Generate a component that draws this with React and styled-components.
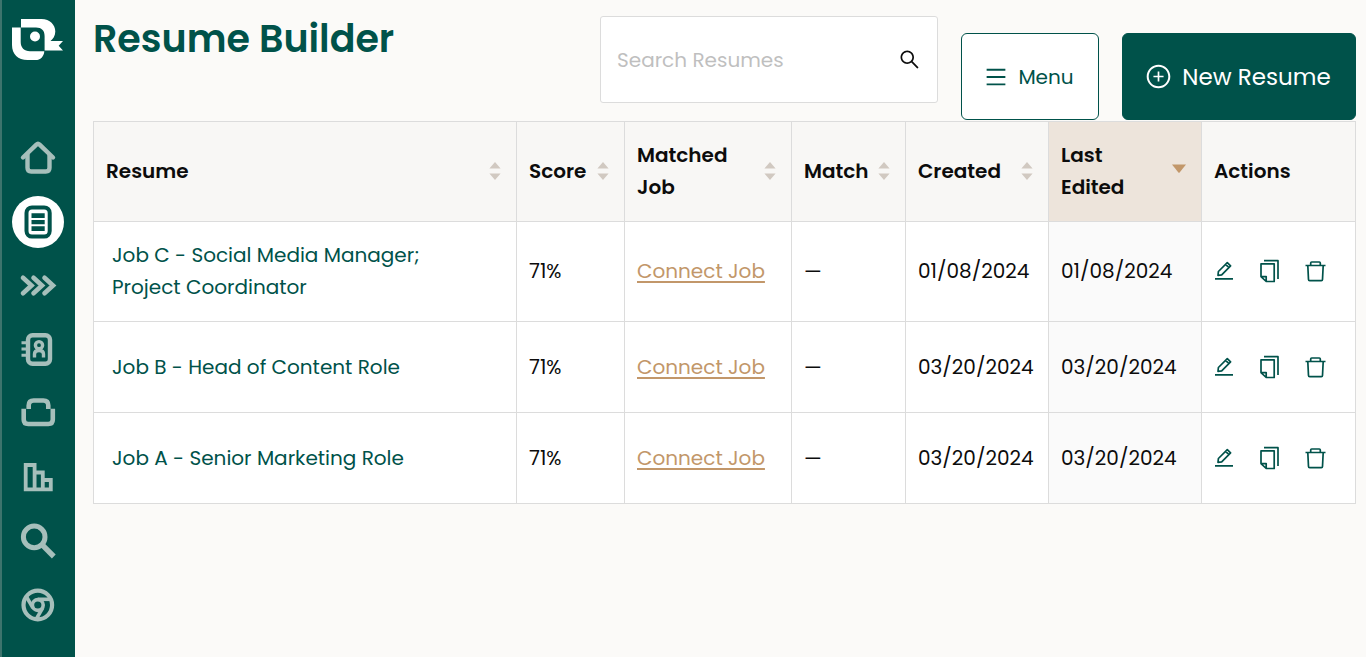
import { useState } from 'react';
import styled, { createGlobalStyle, ThemeProvider } from 'styled-components';
import {
  AiOutlineMenu,
  AiOutlinePlusCircle,
  AiOutlineSearch,
} from 'react-icons/ai';

const theme = {
  green: '#00524a',
  greenEdge: '#3d746d',
  navIcon: '#a6bfbb',
  bgColor: '#fbfaf8',
  headColor: '#f8f7f5',
  sortedHead: '#ede4db',
  sortedCell: '#fafafa',
  borderColor: '#dcdcdc',
  tan: '#c2976a',
  caret: '#d1c9c1',
};

const GlobalStyle = createGlobalStyle`
  * {
    box-sizing: border-box;
  }

  body {
    margin: 0;
    background: ${props => props.theme.bgColor};
    color: #0c0c0c;
    font-family: Poppins, Inter, 'Liberation Sans', sans-serif;
    font-size: 20px;
    line-height: 32px;
  }

  button,
  input {
    font: inherit;
  }

  svg {
    display: block;
    flex-shrink: 0;
  }
`;

const Page = styled.div`
  display: flex;
  min-height: 100vh;
`;

const Sidebar = styled.aside`
  display: flex;
  flex-direction: column;
  align-items: center;
  flex-shrink: 0;
  width: 75px;
  padding-top: 19px;
  background: ${props => props.theme.green};
  border-left: 2px solid ${props => props.theme.greenEdge};
  padding-right: 2px;
`;

const Nav = styled.nav`
  display: flex;
  flex-direction: column;
  gap: 12px;
  margin-top: 71px;
`;

const NavLink = styled.a`
  display: flex;
  justify-content: center;
  align-items: center;
  width: 52px;
  height: 52px;
  border-radius: 50%;
  color: ${props => (props.$active ? props.theme.green : props.theme.navIcon)};
  background: ${props => (props.$active ? '#fff' : 'transparent')};
`;

const Main = styled.main`
  flex: 1;
  min-width: 0;
  padding: 0 10px 0 18px;
`;

const Header = styled.header`
  display: flex;
  align-items: flex-start;
  gap: 23px;
  min-height: 121px;
  padding: 16px 0 1px;
`;

const Title = styled.h1`
  flex: 1;
  margin: 0;
  color: ${props => props.theme.green};
  font-size: 38px;
  font-weight: 600;
  line-height: 46px;
  white-space: nowrap;
`;

const SearchBox = styled.form`
  display: flex;
  align-items: center;
  width: 338px;
  height: 87px;
  padding: 0 16px;
  background: #fff;
  border: 1px solid ${props => props.theme.borderColor};
  border-radius: 3px;
`;

const SearchInput = styled.input`
  flex: 1;
  min-width: 0;
  padding: 0;
  border: none;
  outline: none;
  background: none;

  &::placeholder {
    color: #bfbfbf;
    opacity: 1;
  }
`;

const IconBtn = styled.button`
  display: flex;
  padding: 0;
  border: none;
  background: none;
  color: ${props => props.$color || props.theme.green};
  cursor: pointer;
`;

const HeaderBtn = styled.button`
  display: flex;
  align-items: center;
  align-self: flex-end;
  justify-content: center;
  gap: 10px;
  width: ${props => (props.$primary ? 234 : 138)}px;
  height: 87px;
  padding: 0 2px 0 0;
  border: 1px solid ${props => props.theme.green};
  border-radius: 6px;
  background: ${props => (props.$primary ? props.theme.green : '#fff')};
  color: ${props => (props.$primary ? '#fff' : props.theme.green)};
  font-size: ${props => (props.$primary ? 23 : 20)}px;
  white-space: nowrap;
  cursor: pointer;
`;

const Table = styled.table`
  width: 100%;
  table-layout: fixed;
  border-collapse: collapse;
  background: #fff;
`;

const Col = styled.col`
  width: ${props => (props.$width ? `${props.$width}px` : 'auto')};
`;

const HeadCell = styled.th`
  height: 100px;
  padding: 0 15px 2px 12px;
  border: 1px solid ${props => props.theme.borderColor};
  background: ${props =>
    props.$sorted ? props.theme.sortedHead : props.theme.headColor};
  font-weight: 600;
  text-align: left;
`;

const HeadContent = styled.div`
  display: flex;
  align-items: center;
  justify-content: space-between;
  gap: 8px;
`;

const Cell = styled.td`
  height: 91px;
  padding: 17px 0 18px ${props => props.$left || 12}px;
  border: 1px solid ${props => props.theme.borderColor};
  background: ${props => (props.$sorted ? props.theme.sortedCell : '#fff')};
`;

const ResumeLink = styled.a`
  display: block;
  max-width: 340px;
  color: ${props => props.theme.green};
  text-decoration: none;
`;

const JobLink = styled.a`
  color: ${props => props.theme.tan};
  text-decoration-thickness: 2px;
  text-underline-offset: 3px;
`;

const Actions = styled.div`
  display: flex;
  gap: 22px;
`;

const columns = [
  { key: 'resume', label: 'Resume', sortable: true },
  { key: 'score', label: 'Score', width: 108, sortable: true },
  { key: 'job', label: 'Matched Job', width: 167, sortable: true },
  { key: 'match', label: 'Match', width: 114, sortable: true },
  { key: 'created', label: 'Created', width: 143, sortable: true },
  { key: 'edited', label: 'Last Edited', width: 153, sortable: true },
  { key: 'actions', label: 'Actions', width: 154 },
];

const resumes = [
  {
    id: 3,
    name: 'Job C - Social Media Manager; Project Coordinator',
    score: '71%',
    created: '01/08/2024',
    edited: '01/08/2024',
  },
  {
    id: 2,
    name: 'Job B - Head of Content Role',
    score: '71%',
    created: '03/20/2024',
    edited: '03/20/2024',
  },
  {
    id: 1,
    name: 'Job A - Senior Marketing Role',
    score: '71%',
    created: '03/20/2024',
    edited: '03/20/2024',
  },
];

const Logo = () => (
  <svg width="52" height="42" viewBox="12 19 52 42" fill="#fff">
    <path d="M21 19H41.5C50 19 55.3 25 55.3 31.5C55.3 36 53 39 50.5 41H63L58.7 45.8L63 50.6H44.6V36C44.6 30.5 41.5 27.6 36 27.6H21Z" />
    <path d="M12 27.6H20.7V42C20.7 47.5 24 51.2 30 51.2H44.3C44 56.5 40.5 60 35.5 60H27.5C18 60 12 54 12 45Z" />
    <circle cx="35" cy="36.5" r="5" />
  </svg>
);

const NavIcon = ({ children, strokeWidth = 4 }) => (
  <svg
    width="40"
    height="40"
    viewBox="0 0 40 40"
    fill="none"
    stroke="currentColor"
    strokeWidth={strokeWidth}
  >
    {children}
  </svg>
);

const navItems = [
  {
    label: 'Home',
    icon: (
      <NavIcon strokeWidth={4.4}>
        <path
          d="M5 19.5L18.4 6.6Q20 5 21.6 6.6L35 19.5"
          strokeLinecap="round"
        />
        <path d="M9.5 16V29.8Q9.5 33.5 13.2 33.5H27.8Q31.5 33.5 31.5 29.8V16" />
      </NavIcon>
    ),
  },
  {
    label: 'Resumes',
    active: true,
    icon: (
      <NavIcon>
        <rect x="8.5" y="5.4" width="23.2" height="29.2" rx="5.5" />
        <path
          d="M13.5 11.2H26.7V16H13.5ZM13.5 18H26.7V22.3H13.5ZM13.5 24.3H26.7V29H13.5Z"
          fill="currentColor"
          stroke="none"
        />
      </NavIcon>
    ),
  },
  {
    label: 'Workflow',
    icon: (
      <NavIcon strokeWidth={4.6}>
        <path
          d="M5 11.8L13.5 19.5L5 27.2M15.5 11.8L24 19.5L15.5 27.2M26.5 11.8L35 19.5L26.5 27.2"
          strokeLinecap="round"
        />
      </NavIcon>
    ),
  },
  {
    label: 'Contacts',
    icon: (
      <NavIcon strokeWidth={4.4}>
        <rect x="10" y="5.3" width="22" height="28.5" rx="4.5" />
        <path d="M3.5 12.8H10M3.5 19H10M3.5 25.2H10" strokeWidth="3" />
        <circle cx="21" cy="15.2" r="3.6" strokeWidth="3.4" />
        <path
          d="M16.5 27.5V24Q16.5 20.5 21 20.5Q25.5 20.5 25.5 24V27.5"
          strokeWidth="3.4"
        />
      </NavIcon>
    ),
  },
  {
    label: 'Jobs',
    icon: (
      <NavIcon strokeWidth={4.6}>
        <path d="M10.7 15V11.5Q10.7 6.5 15.7 6.5H25.3Q30.3 6.5 30.3 11.5V15" />
        <path d="M5.7 14.7V25.5Q5.7 30 10.2 30H30.3Q34.8 30 34.8 25.5V14.7" />
      </NavIcon>
    ),
  },
  {
    label: 'Reports',
    icon: (
      <NavIcon strokeWidth={3.8}>
        <path d="M7.7 7H16.6V31.3H7.7ZM16.6 14.5H24.8V31.3H16.6M24.8 22H32.8V31.3H24.8" />
      </NavIcon>
    ),
  },
  {
    label: 'Search',
    icon: (
      <NavIcon strokeWidth={5}>
        <circle cx="16.2" cy="14.9" r="10.8" />
        <path d="M24 22.7L35.8 34.5" strokeWidth="5.4" />
      </NavIcon>
    ),
  },
  {
    label: 'Chrome extension',
    icon: (
      <NavIcon strokeWidth={4.2}>
        <circle cx="19.8" cy="19" r="14.3" />
        <circle cx="19.8" cy="19" r="5.4" strokeWidth="3.6" />
        {[0, 120, 240].map(angle => (
          <path
            key={angle}
            d="M19.8 13.3H32.3"
            strokeWidth="3.6"
            transform={`rotate(${angle} 19.8 19)`}
          />
        ))}
      </NavIcon>
    ),
  },
];

const SortIcon = ({ sorted }) =>
  sorted ? (
    <svg width="14" height="20" viewBox="0 0 14 20" fill={theme.tan}>
      <path d="M0 3.5H14L7.6 11.5Q7 12.2 6.4 11.5Z" />
    </svg>
  ) : (
    <svg width="12" height="20" viewBox="0 0 12 20" fill={theme.caret}>
      <path d="M.4 7.5L6 1L11.6 7.5ZM.4 12.5L6 19L11.6 12.5Z" />
    </svg>
  );

const ActionIcon = ({ children }) => (
  <svg
    width="24"
    height="24"
    viewBox="0 0 24 24"
    fill="none"
    stroke="currentColor"
    strokeWidth="1.7"
    strokeLinejoin="round"
  >
    {children}
  </svg>
);

const actions = [
  {
    label: 'Edit',
    icon: (
      <ActionIcon>
        <path d="M6 16.3L6.4 12.5L15.3 3.7L18.6 6.9L9.7 15.8ZM13.6 5.4L16.9 8.6M3 19.8H21" />
      </ActionIcon>
    ),
  },
  {
    label: 'Duplicate',
    icon: (
      <ActionIcon>
        <path d="M3 4.8H16.2V22.5H8.2L3 17.6ZM3 17.6H8.2V22.5M6 1.7H20V20" />
      </ActionIcon>
    ),
  },
  {
    label: 'Delete',
    icon: (
      <ActionIcon>
        <path d="M1.5 6.5H21.5M6.7 6.5V4Q6.7 3 7.7 3H15.3Q16.3 3 16.3 4V6.5M3.8 6.5L4.5 20.5Q4.5 21.7 5.7 21.7H17.3Q18.5 21.7 18.5 20.5L19.2 6.5" />
      </ActionIcon>
    ),
  },
];

const ResumeRow = ({ name, score, created, edited }) => (
  <tr>
    <Cell $left={18}>
      <ResumeLink href="#resume">{name}</ResumeLink>
    </Cell>
    <Cell>{score}</Cell>
    <Cell>
      <JobLink href="#connect">Connect Job</JobLink>
    </Cell>
    <Cell>—</Cell>
    <Cell>{created}</Cell>
    <Cell $sorted>{edited}</Cell>
    <Cell $left={10}>
      <Actions>
        {actions.map(action => (
          <IconBtn key={action.label} type="button" aria-label={action.label}>
            {action.icon}
          </IconBtn>
        ))}
      </Actions>
    </Cell>
  </tr>
);

const App = () => {
  const [keyword, setKeyword] = useState('');

  const rows = resumes.filter(resume =>
    resume.name.toLowerCase().includes(keyword.toLowerCase())
  );

  return (
    <ThemeProvider theme={theme}>
      <GlobalStyle />
      <Page>
        <Sidebar>
          <Logo />
          <Nav>
            {navItems.map(item => (
              <NavLink
                key={item.label}
                href="#"
                aria-label={item.label}
                $active={item.active}
              >
                {item.icon}
              </NavLink>
            ))}
          </Nav>
        </Sidebar>
        <Main>
          <Header>
            <Title>Resume Builder</Title>
            <SearchBox onSubmit={e => e.preventDefault()}>
              <SearchInput
                aria-label="Search Resumes"
                placeholder="Search Resumes"
                value={keyword}
                onChange={e => setKeyword(e.target.value)}
              />
              <IconBtn type="submit" aria-label="Search" $color="#0c0c0c">
                <AiOutlineSearch size={23} />
              </IconBtn>
            </SearchBox>
            <HeaderBtn type="button">
              <AiOutlineMenu size={24} />
              Menu
            </HeaderBtn>
            <HeaderBtn type="button" $primary>
              <AiOutlinePlusCircle size={27} />
              New Resume
            </HeaderBtn>
          </Header>
          <Table>
            <colgroup>
              {columns.map(col => (
                <Col key={col.key} $width={col.width} />
              ))}
            </colgroup>
            <thead>
              <tr>
                {columns.map(col => (
                  <HeadCell key={col.key} $sorted={col.key === 'edited'}>
                    <HeadContent>
                      {col.label}
                      {col.sortable && (
                        <SortIcon sorted={col.key === 'edited'} />
                      )}
                    </HeadContent>
                  </HeadCell>
                ))}
              </tr>
            </thead>
            <tbody>
              {rows.map(resume => (
                <ResumeRow key={resume.id} {...resume} />
              ))}
            </tbody>
          </Table>
        </Main>
      </Page>
    </ThemeProvider>
  );
};

export default App;
